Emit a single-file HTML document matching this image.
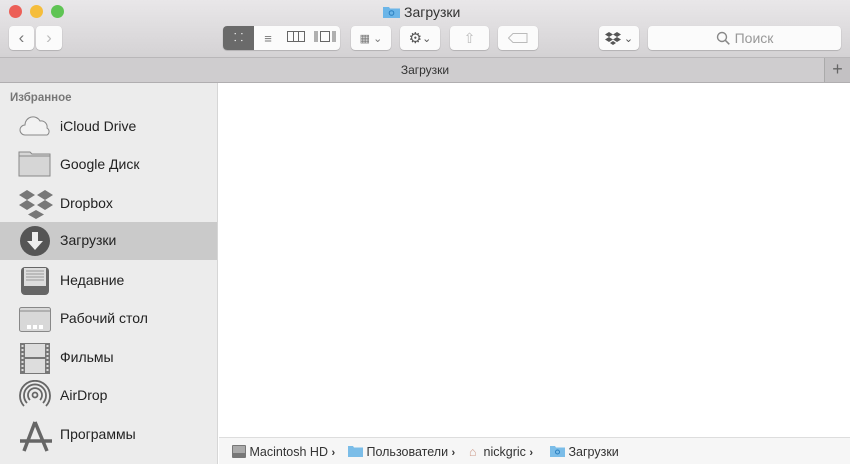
<!DOCTYPE html>
<html><head><meta charset="utf-8"><style>
*{margin:0;padding:0;box-sizing:border-box}
body{width:850px;height:464px;overflow:hidden;font-family:"Liberation Sans",sans-serif;background:#fff;position:relative}
.tb{position:absolute;left:0;top:0;width:850px;height:58px;background:linear-gradient(#e9e7e9,#d4d2d4);border-bottom:1px solid #b9b7b9}
.dot{position:absolute;top:5px;width:13px;height:13px;border-radius:50%}
.btn{position:absolute;top:26px;height:24px;background:#fbfbfb;border-radius:4px;box-shadow:0 0.5px 1px rgba(0,0,0,.3);display:flex;align-items:center;justify-content:center;color:#777}
.tabs{position:absolute;left:0;top:58px;width:850px;height:25px;background:#cfcdcf;border-bottom:1px solid #b0aeb0;font-size:12px;color:#333;text-align:center;line-height:24px}
.side{position:absolute;left:0;top:83px;width:218px;height:381px;background:#ececec;border-right:1px solid #d6d6d6}
.hdr{position:absolute;left:10px;top:9px;font-size:11.5px;color:#777;font-weight:bold}
.it{position:absolute;left:0;width:217px;height:38px;font-size:14px;color:#222}
.it span{position:absolute;left:60px;top:11px}
.it svg{position:absolute;left:18px;top:4px}
.sel{background:#cacaca}
.path{position:absolute;left:219px;top:437px;width:631px;height:27px;background:#f6f6f6;border-top:1px solid #ddd;font-size:12.5px;color:#333}
.path div{position:absolute;top:7px}
</style></head><body>
<div class="tb">
<div class="dot" style="left:9px;background:#ec5f57"></div>
<div class="dot" style="left:30px;background:#f5bd3b"></div>
<div class="dot" style="left:51px;background:#5fc454"></div>
<div style="position:absolute;left:383px;top:4px;font-size:14px;color:#333;"><svg width="17" height="13" style="vertical-align:-1px;margin-right:4px"><path d="M0 2h6l1 1.5h10V13H0z" fill="#6bb5e8"/><circle cx="8.5" cy="8" r="2.3" fill="none" stroke="#2a7fc0"/></svg>Загрузки</div>
<div class="btn" style="left:9px;width:25px;font-size:17px">&#8249;</div>
<div class="btn" style="left:36px;width:26px;font-size:17px;color:#bbb">&#8250;</div>
<div class="btn" style="left:223px;width:117px;justify-content:flex-start">
 <div style="width:31px;height:24px;background:#6a6a6a;border-radius:4px 0 0 4px;color:#fff;font-size:11px;text-align:center;line-height:24px">⸬</div>
 <div style="width:28px;text-align:center;font-size:13px">≡</div>
 <div style="width:28px;text-align:center"><svg width="18" height="11"><rect x=".5" y=".5" width="17" height="10" fill="none" stroke="#666"/><path d="M6.5 0v11M11.5 0v11" stroke="#666"/></svg></div>
 <div style="width:30px;text-align:center"><svg width="22" height="11"><path d="M1 0v11M3 0v11M19 0v11M21 0v11" stroke="#666"/><rect x="6.5" y=".5" width="9" height="10" fill="none" stroke="#666"/></svg></div>
</div>
<div class="btn" style="left:351px;width:40px;font-size:11px">▦ ⌄</div>
<div class="btn" style="left:400px;width:40px;font-size:15px;color:#555">⚙<span style="font-size:11px">⌄</span></div>
<div class="btn" style="left:450px;width:39px;color:#bbb;font-size:14px">⇧</div>
<div class="btn" style="left:498px;width:40px"><svg width="20" height="10"><path d="M5 .5h14v9H5L.5 5z" fill="none" stroke="#bbb"/></svg></div>
<div class="btn" style="left:599px;width:40px;font-size:11px;color:#555"><svg width="16" height="14"><path d="M4 1l4 2.5-4 2.5-4-2.5zM12 1l4 2.5-4 2.5-4-2.5zM4 6l4 2.5-4 2.5-4-2.5zM12 6l4 2.5-4 2.5-4-2.5zM8 10l3 2-3 2-3-2z" fill="#555"/></svg>&nbsp;⌄</div>
<div class="btn" style="left:648px;width:193px;font-size:14px;color:#999"><svg width="14" height="14" style="margin-right:5px"><circle cx="6" cy="6" r="4.5" fill="none" stroke="#888" stroke-width="1.4"/><path d="M9.3 9.3l4 4" stroke="#888" stroke-width="1.5"/></svg>Поиск</div>
</div>
<div class="tabs">Загрузки<div style="position:absolute;right:0;top:0;width:26px;height:24px;background:#c3c1c3;border-left:1px solid #aaa;font-size:18px;color:#666;line-height:23px">+</div></div>
<div class="side">
<div class="hdr">Избранное</div>
<div class="it" style="top:24px"><svg width="34" height="30"><path d="M7 24a5 5 0 0 1 0-10 8 8 0 0 1 15-4 6 6 0 0 1 7 7 4 4 0 0 1 0 7z" fill="#f2f2f2" stroke="#888"/></svg><span>iCloud Drive</span></div>
<div class="it" style="top:62px"><svg width="34" height="30"><path d="M1 3h11l2 2h18v22H1z" fill="#d6d6d6" stroke="#888"/><path d="M1 7h31" stroke="#888"/></svg><span>Google Диск</span></div>
<div class="it" style="top:101px"><svg width="36" height="32"><path d="M9 2l8 5-8 5-8-5zM27 2l8 5-8 5-8-5zM9 12l8 5-8 5-8-5zM27 12l8 5-8 5-8-5zM18 22l8 4.5-8 4.5-8-4.5z" fill="#777"/></svg><span>Dropbox</span></div>
<div class="it sel" style="top:139px"><svg width="34" height="32" style="top:3px"><circle cx="17" cy="16" r="15" fill="#555"/><path d="M14 7h6v9h5l-8 9-8-9h5z" fill="#eee"/></svg><span style="top:10px">Загрузки</span></div>
<div class="it" style="top:178px"><svg width="34" height="32"><rect x="3" y="2" width="28" height="28" rx="4" fill="#666"/><rect x="6" y="3" width="22" height="18" fill="#ddd"/><path d="M8 6h18M8 9h18M8 12h18M8 15h18" stroke="#999"/></svg><span>Недавние</span></div>
<div class="it" style="top:216px"><svg width="34" height="32"><rect x="1.5" y="4.5" width="31" height="24" rx="2" fill="#d8d8d8" stroke="#888"/><path d="M2 8h30" stroke="#888"/><rect x="9" y="22" width="4" height="4" fill="#fff"/><rect x="15" y="22" width="4" height="4" fill="#fff"/><rect x="21" y="22" width="4" height="4" fill="#fff"/></svg><span>Рабочий стол</span></div>
<div class="it" style="top:255px"><svg width="34" height="34"><rect x="2" y="1" width="30" height="31" fill="#777"/><rect x="7" y="2" width="20" height="13" fill="#ddd"/><rect x="7" y="17" width="20" height="14" fill="#ddd"/><path d="M4.5 3v28M29.5 3v28" stroke="#ddd" stroke-dasharray="2 2" stroke-width="2"/></svg><span>Фильмы</span></div>
<div class="it" style="top:293px"><svg width="34" height="34"><g fill="none" stroke="#666" stroke-width="1.8"><circle cx="17" cy="15" r="2.5"/><path d="M12 20a7 7 0 1 1 10 0M9 23a11 11 0 1 1 16 0M6 26a15 15 0 1 1 22 0"/></g></svg><span>AirDrop</span></div>
<div class="it" style="top:332px"><svg width="36" height="34"><path d="M17 3L6 32M17 3l12 29M2 22h32" stroke="#666" stroke-width="3.5" fill="none"/></svg><span>Программы</span></div>
</div>
<div class="path">
<div style="left:13px"><svg width="14" height="13" style="vertical-align:-2px"><rect x="0" y="0" width="14" height="13" rx="1" fill="#777"/><rect x="1" y="1" width="12" height="7" fill="#aaa"/></svg> Macintosh HD <b style="font-size:11px">›</b></div>
<div style="left:129px"><svg width="15" height="12" style="vertical-align:-1px"><path d="M0 1h5l1 1.5h9V12H0z" fill="#7bbde8"/></svg> Пользователи <b style="font-size:11px">›</b></div>
<div style="left:250px"><span style="color:#c98">⌂</span>&nbsp; nickgric <b style="font-size:11px">›</b></div>
<div style="left:331px"><svg width="15" height="12" style="vertical-align:-1px"><path d="M0 1h5l1 1.5h9V12H0z" fill="#7bbde8"/><circle cx="7.5" cy="7" r="2" fill="none" stroke="#2a7fc0"/></svg> Загрузки</div>
</div>
</body></html>
